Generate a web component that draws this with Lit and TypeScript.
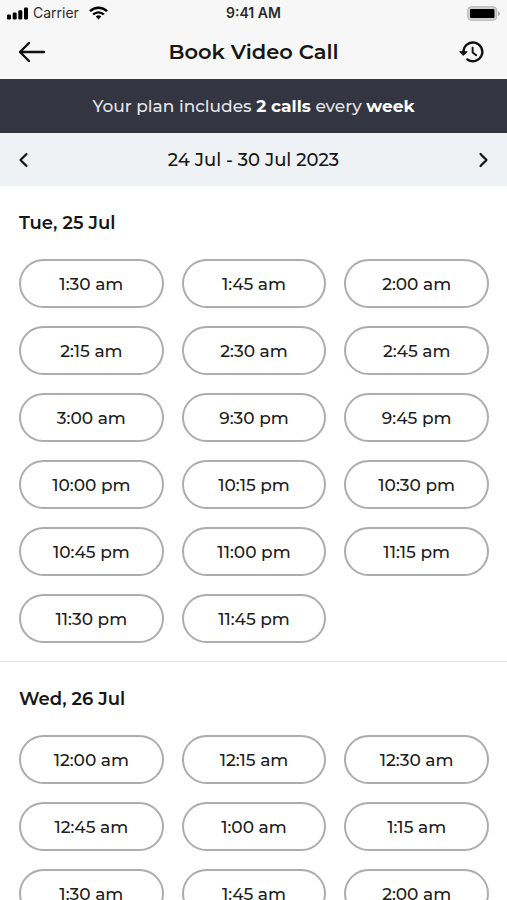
import { LitElement, html, css } from "lit";
import { customElement, property } from "lit/decorators.js";

interface Day {
  label: string;
  slots: string[];
}

const DAYS: Day[] = [
  {
    label: "Tue, 25 Jul",
    slots: [
      "1:30 am", "1:45 am", "2:00 am", "2:15 am", "2:30 am", "2:45 am",
      "3:00 am", "9:30 pm", "9:45 pm", "10:00 pm", "10:15 pm", "10:30 pm",
      "10:45 pm", "11:00 pm", "11:15 pm", "11:30 pm", "11:45 pm",
    ],
  },
  {
    label: "Wed, 26 Jul",
    slots: [
      "12:00 am", "12:15 am", "12:30 am", "12:45 am", "1:00 am", "1:15 am",
      "1:30 am", "1:45 am", "2:00 am",
    ],
  },
];

@customElement("status-bar")
class StatusBar extends LitElement {
  static styles = css`
    :host {
      display: grid;
      grid-template-columns: 1fr auto 1fr;
      align-items: center;
      height: 26px;
      padding: 0 7px;
      font: 400 14px/20px Inter, sans-serif;
      color: #2b2b2b;
    }
    .left {
      display: flex;
      align-items: center;
    }
    .carrier {
      margin: 0 10px 0 5px;
    }
    .time {
      font-weight: 600;
      font-size: 14px;
    }
    .battery {
      justify-self: end;
    }
    svg {
      display: block;
    }
  `;

  render() {
    return html`
      <div class="left">
        <svg width="21" height="13" viewBox="0 0 21 13" fill="#000" aria-hidden="true">
          <rect x="0" y="7.5" width="4" height="5" rx="1.3" />
          <rect x="5.7" y="5.5" width="4" height="7" rx="1.3" />
          <rect x="11.3" y="3.2" width="4" height="9.3" rx="1.3" />
          <rect x="17" y="0.5" width="4" height="12" rx="1.3" />
        </svg>
        <span class="carrier">Carrier</span>
        <svg width="19" height="14" viewBox="0 0 19 14" fill="none" stroke="#000" aria-hidden="true">
          <path d="M1 5.2a12.2 12.2 0 0 1 17 0" stroke-width="2.5" />
          <path d="M4.1 8.5a7.8 7.8 0 0 1 10.8 0" stroke-width="2.4" />
          <path d="M9.5 13.4 6.8 10.6a3.9 3.9 0 0 1 5.4 0z" fill="#000" stroke="none" />
        </svg>
      </div>
      <span class="time">9:41 AM</span>
      <svg class="battery" width="33" height="15" viewBox="0 0 33 15" aria-hidden="true">
        <rect x="0.7" y="0.7" width="29" height="13.6" rx="3.6" fill="#d2d2d2" stroke="#b4b4b4" />
        <rect x="3" y="3" width="24.5" height="9" rx="1" fill="#000" />
        <path d="M31 5v5q2-1 2-2.500T31 5z" fill="#aaa" />
      </svg>
    `;
  }
}

@customElement("day-slots")
class DaySlots extends LitElement {
  @property({ attribute: false }) day!: Day;

  static styles = css`
    :host {
      display: block;
      padding: 24px 18px 18px 19px;
    }
    h2 {
      margin: 0 0 23px;
      font: 600 18px/26px Montserrat, Inter, sans-serif;
      color: #161616;
    }
    .grid {
      display: grid;
      grid-template-columns: repeat(3, 1fr);
      gap: 18px;
    }
    button {
      height: 49px;
      padding: 0;
      border: 2px solid #acadb1;
      border-radius: 25px;
      background: #fff;
      font: 500 17px/24px Montserrat, Inter, sans-serif;
      color: #202020;
      cursor: pointer;
    }
  `;

  render() {
    return html`
      <h2>${this.day.label}</h2>
      <div class="grid">
        ${this.day.slots.map((slot) => html`<button type="button">${slot}</button>`)}
      </div>
    `;
  }
}

@customElement("app-root")
class AppRoot extends LitElement {
  static styles = css`
    :host {
      display: flex;
      flex-direction: column;
      height: 100vh;
      background: #fff;
      font-family: Montserrat, Inter, sans-serif;
      color: #161616;
    }
    .top {
      background: #f7f7f7;
    }
    .bar {
      display: grid;
      grid-template-columns: 1fr auto 1fr;
      align-items: center;
      height: 53px;
      box-sizing: border-box;
      padding: 0 18px;
    }
    .top .bar {
      padding-bottom: 2px;
    }
    h1 {
      margin: 0;
      font-size: 21px;
      font-weight: 600;
      line-height: 28px;
    }
    .bar button {
      display: flex;
      padding: 0;
      border: 0;
      background: none;
      color: #111;
      cursor: pointer;
    }
    .end {
      justify-self: end;
    }
    .plan {
      flex: none;
      margin: 0;
      background: #333540;
      color: #e6e6ec;
      text-align: center;
      font-size: 17px;
      font-weight: 500;
      line-height: 54px;
    }
    .plan strong {
      font-weight: 700;
      color: #fff;
    }
    .week {
      flex: none;
      background: #eff2f5;
      font-size: 18px;
      font-weight: 500;
    }
    .days {
      flex: 1;
      min-height: 0;
      overflow-y: auto;
      scrollbar-width: none;
    }
    day-slots + day-slots {
      border-top: 1px solid #e6e6e6;
    }
  `;

  render() {
    return html`
      <header class="top">
        <status-bar></status-bar>
        <div class="bar">
          <button type="button" aria-label="Back">
            <svg width="28" height="22" viewBox="0 0 28 22" fill="none" stroke="currentColor" stroke-width="2.400" stroke-linecap="round" stroke-linejoin="round">
              <path d="M11 2 2 11l9 9M2 11h24" />
            </svg>
          </button>
          <h1>Book Video Call</h1>
          <button class="end" type="button" aria-label="Call history">
            <svg width="30" height="24" viewBox="0 0 30 24" fill="none" stroke="currentColor" stroke-width="2.400" stroke-linecap="round" stroke-linejoin="round">
              <path d="M4.500 12A9.400 9.400 0 1 1 8.400 19.500" />
              <path d="M1 11.700h7L4.500 15.200z" fill="currentColor" stroke-width="1" />
              <path d="M13.600 7.600v4.800l3.600 2.800" stroke-width="1.900" />
            </svg>
          </button>
        </div>
      </header>
      <p class="plan">Your plan includes <strong>2 calls</strong> every <strong>week</strong></p>
      <nav class="bar week" aria-label="Week">
        <button type="button" aria-label="Previous week">
          <svg width="11" height="16" viewBox="0 0 11 16" fill="none" stroke="currentColor" stroke-width="2.200" stroke-linecap="round" stroke-linejoin="round">
            <path d="M8.500 2 2.500 8l6 6" />
          </svg>
        </button>
        <span>24 Jul - 30 Jul 2023</span>
        <button class="end" type="button" aria-label="Next week">
          <svg width="11" height="16" viewBox="0 0 11 16" fill="none" stroke="currentColor" stroke-width="2.200" stroke-linecap="round" stroke-linejoin="round">
            <path d="M2.500 2 8.500 8l-6 6" />
          </svg>
        </button>
      </nav>
      <main class="days">
        ${DAYS.map((day) => html`<day-slots .day=${day}></day-slots>`)}
      </main>
    `;
  }
}
